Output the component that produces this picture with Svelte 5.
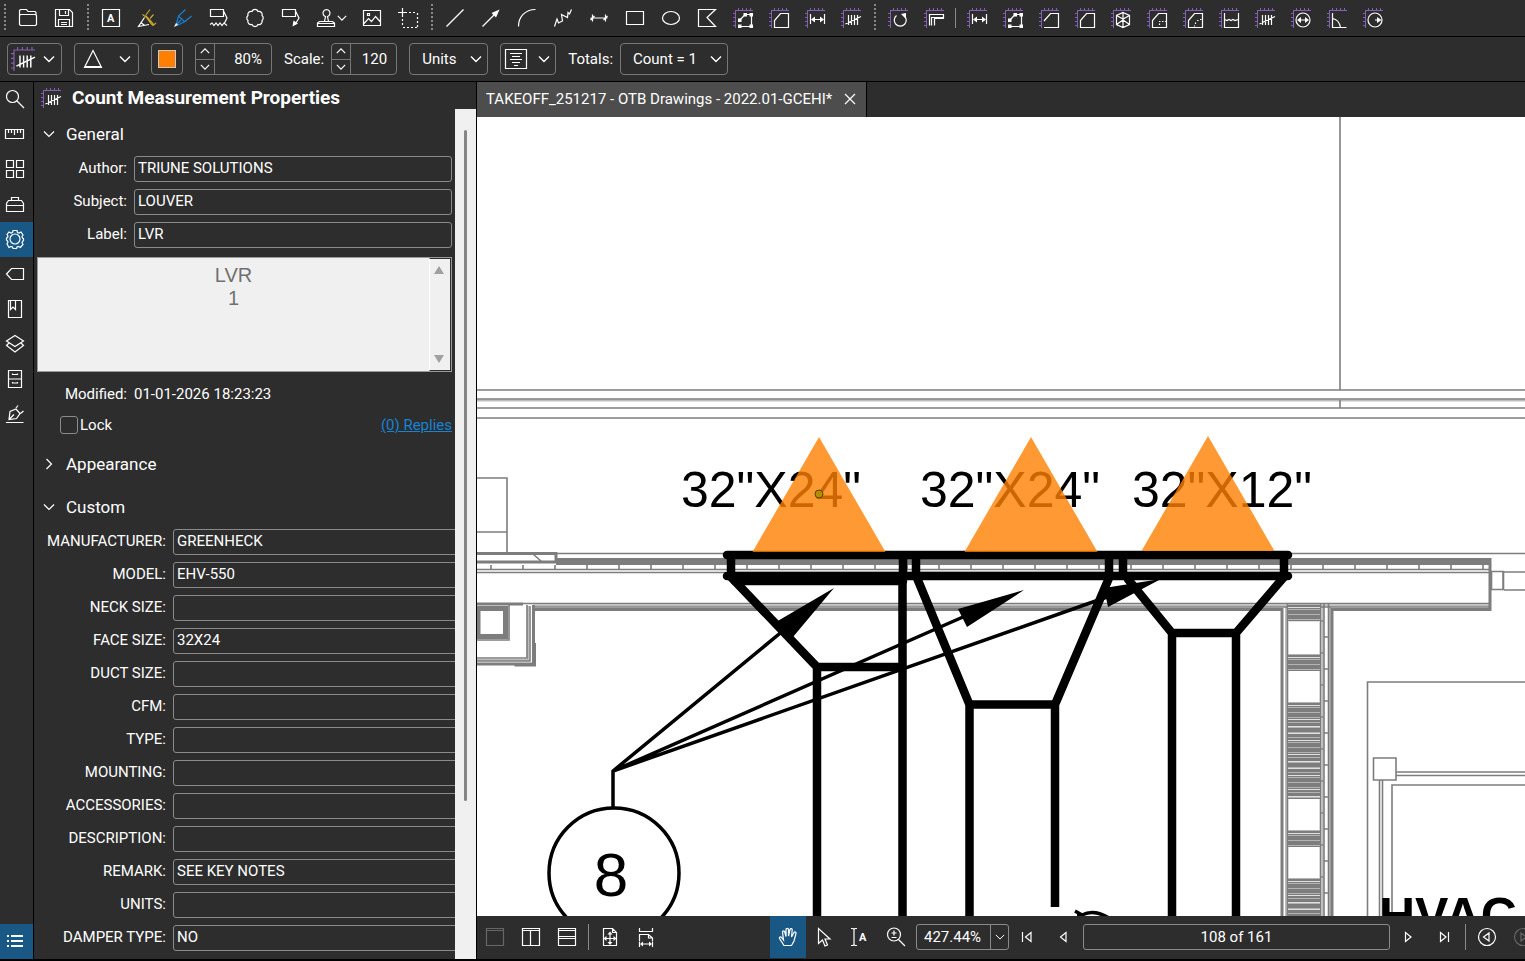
<script lang="ts">
  type Icon = {
    d?: string;
    fill?: string;
    tint?: string;
    accent?: string;
    text?: string;
    tx?: number;
    ty?: number;
    ruler?: boolean;
  };

  const tally = 'M7.5 7v10M10.5 7v10M13.5 7v10M16.5 7v10M4.5 16L20 8.5';

  const icons: Record<string, Icon> = {
    open: { d: 'M1.5 16.5v-14l1-1h6l1.5 2h7l1 1v3M1.5 16.5v-9l1-1h15l1 1v9l-1 1h-15z' },
    save: { d: 'M1.5 1.5h14l3 3v14h-17zM5.5 1.5v6h9v-6M11.5 3v3M4.5 18.5v-7h11v7M7 14.5h6M7 16.5h6' },
    textbox: { d: 'M1.5 1.5h17v17h-17z', text: 'A', tx: 6, ty: 14 },
    highlight: {
      d: 'M7.5 9.5L1.5 18.5L12 16.5M4.5 15l3 2.5',
      tint: '#c9a52b',
      accent: 'M13 1.5L8.5 7.5M5.5 6.5l4 3 4.5 6 2 2 3-2.5M16.5 6.5l-3.5 4M9 8l6 6.5 1.5 2',
    },
    pen: { fill: 'M1 19l2-4 2 2z', tint: '#1683d4', accent: 'M12.5 1.5L5.5 8l-2 7.5L5 17l7-3.5 6.5-5.5M6 8.5l5.5 5M4 16l4-4' },
    squiggle: { d: 'M1.5 1.5h13v7h-13zM14.5 3L18 10l-2.5 5M1 16.5l2-1.5 2 2.5 2-2.5 2 2.5 2-2.5 2 2.5 2-2.5 3 2.5' },
    cloud: {
      d: 'M7 3.5a3.2 3.2 0 0 1 6 0a3.2 3.2 0 0 1 4 4a3.2 3.2 0 0 1 0 5a3.2 3.2 0 0 1-4 4a3.2 3.2 0 0 1-6 0a3.2 3.2 0 0 1-4-4a3.2 3.2 0 0 1 0-5a3.2 3.2 0 0 1 4-4z',
    },
    callout: { d: 'M1.5 1.5h13v7h-13zM14.5 3l3.5 7-4 6.5', fill: 'M11.5 18.5l1-6 4.5 3z' },
    stamp: { d: 'M1.5 18.5h17v-3.5l-2-1.5h-13l-2 1.5zM2 15.5h16M8.5 13.5l1-5a3.5 3.5 0 1 1 2 0l1 5' },
    image: { d: 'M1.5 2.5h17v15h-17zM2 15.5l4.5-5 3 3 4-5 5 5.5M5.5 5.5h2v2h-2z' },
    snapshot: {
      d: 'M4.5 0v9M0 4.5h9M11 4.5h2M15 4.5h2M19.5 5v2M19.5 9v2M19.5 13v2M19.5 17v2M4.5 11v2M4.5 15v2M5 19.5h2M9 19.5h2M13 19.5h2M17 19.5h2',
    },
    line: { d: 'M1.5 18.5l17-17' },
    arrow: { d: 'M1.5 18.5L14 6', fill: 'M18.5 1.5l-8 3.5 4.5 4.5z' },
    arc: { d: 'M1.5 18.5C1.5 9 8 1.5 18.5 1.5' },
    polyline: { d: 'M1.5 18.5l2.5-7.5 1.5 4 4-2-1-6.500 6 3 .5-5 1.500 1.500 2-4.500' },
    dimension: { d: 'M1.5 10h17M3.5 6.5v7M16.5 6.5v7M1.5 12l4-4M14.5 12l4-4' },
    rect: { d: 'M1.5 3.5h17v13h-17z' },
    ellipse: { d: 'M1.5 10a8.5 6.5 0 1 1 17 0a8.5 6.5 0 1 1-17 0z' },
    polygon: { d: 'M1.5 1.5h17L10 9.5l8.5 9H1.5z' },
    mArea: { ruler: true, d: 'M7 12L12 6.5h6.500v12H7', fill: 'M5 10.5h3.5v3.5H5zM10.5 5H14v3.5h-3.5zM16.5 5H20v3.5h-3.5zM5 16.5h3.5V20H5zM16.5 16.5H20V20h-3.5z' },
    mPoly: { ruler: true, d: 'M5.5 19.5v-7l6-7h8v14z' },
    mLength: { ruler: true, d: 'M5.5 6v10M19.5 6v10M7 11.5h11', fill: 'M6 11.5l4-3v6zM19 11.5l-4-3v6z' },
    tally: { ruler: true, d: tally },
    mRotate: { ruler: true, d: 'M8.5 7.5a6 6 0 1 0 7.5 0', fill: 'M18 5v6l-5-5z' },
    mCaliper: { ruler: true, d: 'M5.5 17.5v-11h14v4h-9v7M7.5 17.5v-8h12' },
    mPerimeter: { ruler: true, d: 'M5 13l6.5-7.5h8v14H5' },
    mVolume: { ruler: true, d: 'M12 4.5l6.5 3v9l-6.5 3-6.5-3v-9zM5.5 7.5l6.5 3.5 6.5-3.5M12 4.5v15M5.5 16.5L12 12l6.5 4.5' },
    mCutout: { ruler: true, d: 'M5.5 19.5v-7l6-7h8v14zM12 13.5h1.500M15 13.5h1.500M18 13.500h1M12.500 15.500v1.500' },
    mCutArc: { ruler: true, d: 'M5.5 19.5v-7l6-7h8v14zM17 11.5h1.500M14 12.5h1.500M12.500 14.5v1.500M11.500 17.500v1' },
    mDepth: { ruler: true, d: 'M5.5 5v14.5h14V5M5.5 11.5l2.5 1 2-1 2 1 2-1 2 1 3-1' },
    mDiameter: { ruler: true, d: 'M5 12a7 7 0 1 1 14 0a7 7 0 1 1-14 0M8 12h8', fill: 'M6 12l4-3v6zM18 12l-4-3v6z' },
    mAngle: { ruler: true, d: 'M5.5 5v14.5h14M5.5 10.5q6.5 1 8 9' },
    mRadius: { ruler: true, d: 'M5 12a7 7 0 1 1 14 0a7 7 0 1 1-14 0M12 12h4', fill: 'M18.5 12l-4.5-3v6z' },
    search: { d: 'M1.5 7.5a6 6 0 1 1 12 0a6 6 0 1 1-12 0M12 12l7 7' },
    ruler: { d: 'M.5 5.5h18v9H.5zM3.5 6v3M6.5 6v3M9.5 6v5M12.5 6v3M15.5 6v3' },
    grid: { d: 'M1.5 1.5h7v7h-7zM11.5 1.5h7v7h-7zM1.5 11.5h7v7h-7zM11.5 11.5h7v7h-7z' },
    toolbox: { d: 'M1.5 17.5v-8l2-3h13l2 3v8zM6.5 6.5V3.5h7v3M1.5 11.5h6M12.5 11.5h6M7.5 11.5h5' },
    gear: {
      d: 'M8 1.5h4l.5 2 1.5.5 2-1 2 3-1 1.5.5 1.5 1 .5v2l-1 1-.5 1 1 2-2.5 3-2-1-1.5.5-.5 1.5h-3.5l-.5-1.5-1.5-.5-2 1L2 15l1-2-.5-1-1-1V9l1-.5L3 7 2 5.5 4 3l2 1 1.5-.5zM5 10a5 5 0 1 1 10 0a5 5 0 1 1-10 0',
    },
    tag: { d: 'M1.5 10l5-5.5h12v11h-12z' },
    bookmark: { d: 'M3.5 1.5h13v17h-13zM5.5 1.5v9l2.5-2.5 2.5 2.5v-9' },
    layers: { d: 'M10 1.5l8.5 5.5-8.5 5.5L1.5 7zM4 9l-2.5 2.5L10 18l8.5-6.5L16 9' },
    cabinet: { d: 'M3.5 1.5h13v17h-13zM3.5 10h13M7.5 4.5v1h5v-1M7.5 13v1h5v-1' },
    signature: { d: 'M1 18.5h17.5M4 15.5l1-8 6-2.5 4 4.5-3.5 5zM4 15.5l5-5M11 4l2-2.5M15.5 9.5l3-2.5' },
    list: { fill: 'M2 4h2v2H2zM6 4h12v2H6zM2 9h2v2H2zM6 9h12v2H6zM2 14h2v2H2zM6 14h12v2H6z' },
    single: { d: 'M1.5 1.5h17v17h-17zM1.5 3.5h17', tint: '#666' },
    splitV: { d: 'M1.5 1.5h17v17h-17zM1.5 3.5h17M9.5 3.5v15' },
    splitH: { d: 'M1.5 1.5h17v17h-17zM1.5 3.5h17M1.5 9.5h17M1.5 11.5h17' },
    fitPage: { d: 'M3.5 1.5h9l4 4v13h-13zM12.5 1.5v4h4M10 6v11M4.5 11.5h11', fill: 'M10 4.5l2.5 3h-5zM10 18l2.5-3h-5zM3.5 11.5l3-2.5v5zM16.5 11.5l-3-2.5v5z' },
    fitWidth: { d: 'M3.5 1v3.5h13V1M3.5 14V7.5h9l4 3.5v3M12.5 7.5V11h4M3.5 14.5V20M16.5 14.5V20M5 17h10', fill: 'M4 17l3-2.5v5zM16 17l-3-2.5v5z' },
    hand: { d: 'M6 18.5L1.5 11.5c-.5-1.5 1-2 2-1L5.5 13 4.5 5c0-1.5 2-1.5 2.2 0L8 9.5 8 2.5c0-1.5 2.5-1.5 2.5 0V9l1.5-6.5c.5-1.5 2.5-1 2.2.5L13.5 10l2.5-4.5c.8-1.2 2.5-.3 2 1L16 14l-2.5 4.5z' },
    select: { d: 'M4.5 1.5v15l4-3.5 2.5 6 2.5-1-2.5-6h5z' },
    selectText: { d: 'M1 1.5h2l1 1 1-1h2M4 2v16M1 18.5h2l1-1 1 1h2', text: 'A', tx: 9, ty: 14 },
    zoom: { d: 'M1.5 7.5a6.5 6.5 0 1 1 13 0a6.5 6.5 0 1 1-13 0M12.5 12.5l6.5 6.5M8 3.5v5M5.5 6h5M5.5 10.5h5' },
    first: { d: 'M5.5 5v10M14 5.5v9L8.5 10z' },
    prev: { d: 'M13 5.5v9L7.5 10z' },
    next: { d: 'M7.5 5.5v9L13 10z' },
    last: { d: 'M14.5 5v10M6.5 5.5v9L12 10z' },
    viewBack: { d: 'M1.5 10a8.5 8.5 0 1 1 17 0a8.5 8.5 0 1 1-17 0M12 6v8l-5.5-4z' },
    viewForward: { d: 'M1.5 10a8.5 8.5 0 1 1 17 0a8.5 8.5 0 1 1-17 0M8 6v8l5.5-4z', tint: '#666' },
    triangle: { d: 'M10 1.5l8.5 17h-17zM2 17.5h16' },
    align: { d: 'M4 4.5h12M6 7.5h8M4 10.5h12M6 13.5h8M8 16.5h4M-.5.5h21v19h-21z' },
  };

  const toolGroups = [
    ['open', 'save'],
    ['textbox', 'highlight', 'pen', 'squiggle', 'cloud', 'callout', 'stamp', 'image', 'snapshot'],
    ['line', 'arrow', 'arc', 'polyline', 'dimension', 'rect', 'ellipse', 'polygon', 'mArea', 'mPoly', 'mLength', 'tally'],
    ['mRotate', 'mCaliper', '|', 'mLength', 'mArea', 'mPerimeter', 'mPoly', 'mVolume', 'mCutout', 'mCutArc', 'mDepth', 'tally', 'mDiameter', 'mAngle', 'mRadius'],
  ];

  const rail = ['search', 'ruler', 'grid', 'toolbox', 'gear', 'tag', 'bookmark', 'layers', 'cabinet', 'signature'];

  let general = $state([
    { label: 'Author', value: 'TRIUNE SOLUTIONS' },
    { label: 'Subject', value: 'LOUVER' },
    { label: 'Label', value: 'LVR' },
  ]);

  let custom = $state([
    { label: 'MANUFACTURER', value: 'GREENHECK' },
    { label: 'MODEL', value: 'EHV-550' },
    { label: 'NECK SIZE', value: '' },
    { label: 'FACE SIZE', value: '32X24' },
    { label: 'DUCT SIZE', value: '' },
    { label: 'CFM', value: '' },
    { label: 'TYPE', value: '' },
    { label: 'MOUNTING', value: '' },
    { label: 'ACCESSORIES', value: '' },
    { label: 'DESCRIPTION', value: '' },
    { label: 'REMARK', value: 'SEE KEY NOTES' },
    { label: 'UNITS', value: '' },
    { label: 'DAMPER TYPE', value: 'NO' },
  ]);

  let panel = $state('gear');

  const tags = [
    { x: 681, text: '32"X24"' },
    { x: 920, text: '32"X24"' },
    { x: 1132, text: '32"X12"' },
  ];

  const counts = [
    { x: 819, y: 437 },
    { x: 1031, y: 437 },
    { x: 1208, y: 436 },
  ];

  // hatched insulation blocks in the vertical wall
  const hatches = [
    { y: 604, h: 18 },
    { y: 654, h: 17 },
    { y: 702, h: 97 },
    { y: 830, h: 17 },
    { y: 878, h: 40 },
  ];

  const range = (from: number, to: number, step: number) =>
    Array.from({ length: Math.ceil((to - from) / step) }, (_, i) => from + i * step);
</script>

{#snippet icon(name: string)}
  {@const i = icons[name]}
  <svg class="icon" viewBox="0 0 20 20" aria-hidden="true">
    {#if i.ruler}
      <path class="ruler" d="M2 2.5h18M2.5 2v18M5.5 0v2M9.5 0v2M13.5 0v2M17.5 0v2M0 5.5h2M0 9.5h2M0 13.5h2M0 17.5h2" />
    {/if}
    {#if i.accent}<path d={i.accent} stroke={i.tint} />{/if}
    {#if i.d}<path d={i.d} stroke={i.accent ? '#fff' : (i.tint ?? '#fff')} />{/if}
    {#if i.fill}<path class="solid" d={i.fill} />{/if}
    {#if i.text}<text x={i.tx} y={i.ty}>{i.text}</text>{/if}
  </svg>
{/snippet}

{#snippet chevron(dir = 'down')}
  <svg class="chevron {dir}" viewBox="0 0 12 12" aria-hidden="true"><path d="M1 3.5l5 5 5-5" /></svg>
{/snippet}

{#snippet spinner(id: string, label: string, value: string)}
  <div class="box spinner">
    <div class="steps">
      <button aria-label="Increase {label}">{@render chevron('up')}</button>
      <button aria-label="Decrease {label}">{@render chevron()}</button>
    </div>
    <input {id} aria-label={label} {value} />
  </div>
{/snippet}

<div class="app">
  <header class="tools">
    {#each toolGroups as group}
      <span class="grip"></span>
      {#each group as name}
        {#if name === '|'}
          <span class="sep"></span>
        {:else}
          <button class="tool" class:split={name === 'stamp'} aria-label={name}>
            {@render icon(name)}
            {#if name === 'stamp'}{@render chevron()}{/if}
          </button>
        {/if}
      {/each}
    {/each}
  </header>

  <div class="options">
    <button class="box kind" aria-label="Tool">{@render icon('tally')}{@render chevron()}</button>
    <button class="box shape" aria-label="Shape">{@render icon('triangle')}{@render chevron()}</button>
    <button class="box colour" aria-label="Colour"><span class="swatch"></span></button>
    {@render spinner('opacity', 'Opacity', '80%')}
    <div class="pair">
      <label for="scale">Scale:</label>
      {@render spinner('scale', 'Scale', '120')}
    </div>
    <div class="box drop units">
      <select aria-label="Units"><option>Units</option></select>
      {@render chevron()}
    </div>
    <button class="box align" aria-label="Alignment">{@render icon('align')}{@render chevron()}</button>
    <div class="pair">
      <label for="totals">Totals:</label>
      <div class="box drop totals">
        <select id="totals"><option>Count = 1</option></select>
        {@render chevron()}
      </div>
    </div>
  </div>

  <div class="body">
    <nav class="rail">
      {#each rail as name}
        <button class:active={panel === name} aria-label={name} onclick={() => (panel = name)}>
          {@render icon(name)}
        </button>
      {/each}
      <button class="bottom active" aria-label="Markups list">{@render icon('list')}</button>
    </nav>

    <aside class="panel">
      <h1>{@render icon('tally')}Count Measurement Properties</h1>
      <div class="scroller">
        <div class="props">
          <button class="section">{@render chevron()}General</button>
          <div class="rows">
            {#each general as field}
              <div class="row">
                <label for={field.label}>{field.label}:</label>
                <input id={field.label} bind:value={field.value} />
              </div>
            {/each}
          </div>

          <div class="note">
            <textarea aria-label="Comment" readonly value={'LVR\n1'}></textarea>
            <div class="note-bar">
              <svg viewBox="0 0 10 8"><path d="M5 0l5 8H0z" /></svg>
              <svg viewBox="0 0 10 8"><path d="M0 0h10L5 8z" /></svg>
            </div>
          </div>

          <div class="row modified"><span>Modified:</span><time>01-01-2026 18:23:23</time></div>
          <div class="lock">
            <label><input type="checkbox" />Lock</label>
            <a href="#replies">(0) Replies</a>
          </div>

          <button class="section appearance">{@render chevron('right')}Appearance</button>
          <button class="section">{@render chevron()}Custom</button>
          <div class="rows wide">
            {#each custom as field}
              <div class="row">
                <label for={field.label}>{field.label}:</label>
                <input id={field.label} bind:value={field.value} />
              </div>
            {/each}
          </div>
        </div>
        <div class="scrollbar"><span></span></div>
      </div>
    </aside>

    <main>
      <div class="tabs">
        <div class="tab">
          <span>TAKEOFF_251217 - OTB Drawings - 2022.01-GCEHI*</span>
          <button aria-label="Close tab">
            <svg viewBox="0 0 12 12"><path d="M1 1l10 10M11 1L1 11" /></svg>
          </button>
        </div>
      </div>

      <div class="sheet">
        <svg viewBox="477 117 1048 799" preserveAspectRatio="xMinYMin slice" role="img" aria-label="Drawing sheet">
          <!-- walls -->
          <path class="light" d="M477 400.5h1048M533 605.5h957M1286 606v310M1322.5 606v310M1330 606v310M528 606v54h-51" />
          <g class="thin">
            <path d="M477 390h1048M477 399h1048M477 408h1048M477 418h1048M1340 117v273M1340 400v8" />
            <path d="M477 478h30v74M477 532h30M533 554l9 8M556 553.5h969" />
            <path d="M477 569.5h1013M477 572.5h1013M1504 572h21M1504 590h21" />
            <path d="M1525 682h-157.5v234M1525 785h-133v131M1373.5 758h22.5v22h-22.5z" />
            <path d="M1396 772h129M1396 775.5h129M1379.5 780v136M1382.5 780v136" />
            <path d="M523 603.5h967M533 607h957M1287.5 604v312M1320.5 604v312M1324 604v312M1328.5 604v312M527 605v53h-50M530 606v55h-53" />
            {#each range(491, 1490, 32) as x}<path d="M{x} 565v5" />{/each}
            {#each range(637, 916, 32) as y}<path d="M1324 {y}h5M1320 {y - 16}h3" />{/each}
          </g>
          <path class="thick" d="M477 553.5h79v8M477 562h79M477 604h46M534 609.5h748v307M1490 558v53M1490 609.5h-158v307" />
          <path class="thick" d="M533.5 605v59h-56.500M534.500 643v22h-20" />
          <path class="thin" d="M1491.5 571.5h12v18h-12zM1503 571v19" />
          <path class="band" d="M556 561.5h934" />
          <rect class="column" x="478" y="608.5" width="27.5" height="28" />
          <path class="thin" d="M509 604v36h-32" />
          {#each hatches as h}
            <rect class="hatch" x="1288" y={h.y} width="32" height={h.h} />
            {#each range(h.y + 3, h.y + h.h, 7) as y}<path class="gapline" d="M1288 {y + 0.5}h32" />{/each}
            {#each range(h.y, h.y + h.h, 5) as y}<path class="softline" d="M1288 {y + 0.5}h32" />{/each}
          {/each}

          <!-- notes -->
          {#each tags as t}<text class="dim" x={t.x} y="507">{t.text}</text>{/each}
          <text class="dim key" x="611" y="896">8</text>
          <text class="dim room" x="1379" y="933">HVAC</text>

          <!-- ducts -->
          <g class="duct">
            <path d="M727 555h561M727 576h561M731 555v21M903 555v21M916 555v21M1109 555v21M1123 555v21M1284 555v21M735 581h168" stroke-linecap="round" />
            <path d="M731 577l86 90v249M817 667h86M902.5 576v340" />
            <path d="M917 578l52.5 126.5V916M969.5 704.5h85.5V907M1055 704.5L1109 578" />
            <path d="M1127 578l45 55v283M1172 633h64v283M1236 633l48-56" />
          </g>

          <!-- leaders -->
          <g class="leader">
            <path d="M613 808v-37L784 630M613 771l350-154M613 771l494-174" />
            <circle cx="614" cy="873" r="65" />
            <path d="M1075 911l7 4q12-6 27 3M1082 915h-5" />
          </g>
          <path d="M776 622l58-34-41 49zM958 609l66-19-57 37zM1104 588l57-9-53 28z" />

          {#each counts as c}
            <path class="count" d="M{c.x} {c.y}l66.5 115h-133z" />
          {/each}
          <circle class="anchor" cx="819" cy="494" r="4" />
        </svg>
      </div>

      <footer class="status">
        {#each ['single', 'splitV', 'splitH'] as name}
          <button class="tool" aria-label={name}>{@render icon(name)}</button>
        {/each}
        <span class="sep"></span>
        {#each ['fitPage', 'fitWidth'] as name}
          <button class="tool" aria-label={name}>{@render icon(name)}</button>
        {/each}
        <span class="spacer"></span>
        {#each ['hand', 'select', 'selectText', 'zoom'] as name}
          <button class="tool" class:active={name === 'hand'} aria-label={name}>{@render icon(name)}</button>
        {/each}
        <div class="field zoom">
          <input aria-label="Zoom" value="427.44%" />
          <button aria-label="Zoom presets">{@render chevron()}</button>
        </div>
        {#each ['first', 'prev'] as name}
          <button class="tool" aria-label={name}>{@render icon(name)}</button>
        {/each}
        <input class="field page" aria-label="Page" value="108 of 161" />
        {#each ['next', 'last'] as name}
          <button class="tool" aria-label={name}>{@render icon(name)}</button>
        {/each}
        <span class="sep"></span>
        {#each ['viewBack', 'viewForward'] as name}
          <button class="tool" aria-label={name}>{@render icon(name)}</button>
        {/each}
      </footer>
    </main>
  </div>
</div>

<style>
  :global(body) {
    margin: 0;
    background: #000;
  }

  .app,
  .app * {
    box-sizing: border-box;
  }

  .app {
    display: flex;
    flex-direction: column;
    height: 100vh;
    padding-bottom: 2px;
    overflow: hidden;
    background: #000;
    color: #fff;
    font: 15px/20px Roboto, 'Liberation Sans', sans-serif;
  }

  button,
  input,
  select,
  textarea {
    margin: 0;
    padding: 0;
    border: 0;
    border-radius: 0;
    outline: 0;
    background: none;
    color: inherit;
    font: inherit;
  }

  button {
    display: flex;
    align-items: center;
    justify-content: center;
    flex: none;
  }

  .icon {
    flex: none;
    width: 20px;
    height: 20px;
    overflow: visible;
    fill: none;
    stroke-width: 1.2;
  }

  .icon .ruler {
    stroke: #8360b0;
    stroke-width: 1;
  }

  .icon .solid,
  .icon text {
    fill: #fff;
    stroke: none;
  }

  .icon text {
    font: bold 11px Roboto, sans-serif;
  }

  .chevron {
    flex: none;
    width: 12px;
    height: 12px;
    fill: none;
    stroke: #fff;
    stroke-width: 1.4;
    pointer-events: none;
  }

  .chevron.up {
    transform: rotate(180deg);
  }

  .chevron.right {
    transform: rotate(-90deg);
  }

  .tools {
    display: flex;
    flex: none;
    height: 36px;
    margin-bottom: 1px;
    background: #2d2d2d;
  }

  .grip {
    flex: none;
    width: 11px;
    margin: 4px 0;
    background: linear-gradient(#888 50%, transparent 50%) center / 2px 4px repeat-y;
  }

  .grip:first-child {
    width: 10px;
  }

  .tool {
    width: 36px;
    height: 100%;
  }

  .tool.split {
    width: 45px;
    gap: 1px;
  }

  .tool.split .chevron {
    width: 10px;
  }

  .active {
    background: #195885;
  }

  .sep {
    flex: none;
    width: 7px;
    height: 20px;
    margin: 8px 0;
    background: linear-gradient(#8a8a8a, #8a8a8a) center / 1px 100% no-repeat;
  }

  .options {
    display: flex;
    align-items: center;
    flex: none;
    gap: 12px;
    height: 44px;
    margin-bottom: 1px;
    padding-left: 7px;
    background: #2d2d2d;
  }

  .box {
    display: flex;
    align-items: center;
    height: 32px;
    border: 1px solid #777;
    border-radius: 4px;
  }

  .kind {
    width: 55px;
    gap: 8px;
    padding-right: 4px;
  }

  .kind .icon {
    width: 24px;
    height: 24px;
  }

  .shape {
    width: 65px;
    gap: 16px;
  }

  .colour {
    width: 32px;
  }

  .swatch {
    width: 18px;
    height: 18px;
    border: 1px solid #ccc;
    background: #ff8000;
  }

  .align {
    width: 56px;
    gap: 12px;
  }

  .pair {
    display: flex;
    align-items: center;
    gap: 7px;
  }

  .spinner {
    width: 77px;
  }

  .pair .spinner {
    width: 66px;
  }

  .spinner input {
    flex: 1;
    min-width: 0;
    height: 100%;
    padding-right: 9px;
    text-align: right;
  }

  .steps {
    display: flex;
    flex-direction: column;
    width: 19px;
    height: 100%;
    border-right: 1px solid #777;
  }

  .steps button {
    flex: 1;
  }

  .steps button + button {
    border-top: 1px solid #777;
  }

  .steps .chevron {
    width: 10px;
    height: 10px;
  }

  .drop {
    display: grid;
    grid-template-columns: 1fr 12px;
    padding-right: 5px;
  }

  .drop select {
    grid-area: 1 / 1 / 2 / 3;
    height: 100%;
    padding-left: 12px;
    appearance: none;
  }

  .drop .chevron {
    grid-area: 1 / 2;
  }

  .units {
    width: 79px;
  }

  .totals {
    width: 108px;
  }

  .body {
    display: flex;
    flex: 1;
    gap: 1px;
    min-height: 0;
  }

  .rail {
    display: flex;
    flex-direction: column;
    flex: none;
    width: 33px;
    background: #2d2d2d;
  }

  .rail button {
    justify-content: flex-start;
    height: 35px;
    padding: 0 0 1px 5px;
  }

  .rail .bottom {
    margin-top: auto;
  }

  .panel {
    display: flex;
    flex-direction: column;
    flex: none;
    width: 442px;
    background: #2d2d2d;
  }

  h1 {
    display: flex;
    align-items: center;
    flex: none;
    gap: 11px;
    height: 27px;
    margin: 0;
    padding: 4px 0 0 7px;
    font-size: 19px;
    line-height: 20px;
  }

  .scroller {
    display: flex;
    flex: 1;
    min-height: 0;
  }

  .props {
    flex: 1;
    min-width: 0;
    padding: 10px 3px 0;
    overflow: hidden;
  }

  .section {
    gap: 11px;
    height: 30px;
    padding-left: 6px;
    font-size: 17px;
  }

  .section .chevron {
    stroke-width: 1.2;
  }

  .rows {
    display: flex;
    flex-direction: column;
    gap: 7px;
    padding-top: 7px;
  }

  .row {
    display: grid;
    grid-template-columns: 90px 1fr;
    gap: 7px;
    text-align: right;
  }

  .row label {
    line-height: 24px;
    white-space: nowrap;
  }

  .row input {
    min-width: 0;
    height: 26px;
    padding: 0 3px 2px;
    border: 1px solid #8a8a8a;
    border-radius: 3px;
  }

  .wide {
    margin-right: -10px;
  }

  .wide .row {
    grid-template-columns: 129px 1fr;
  }

  .note {
    display: flex;
    height: 115px;
    margin-top: 9px;
    border: 1px solid #9a9a9a;
    background: #f0f0f0;
  }

  .note textarea {
    flex: 1;
    padding-top: 6px;
    resize: none;
    overflow: hidden;
    color: #707070;
    font: 20px/23px 'Liberation Sans', sans-serif;
    text-align: center;
  }

  .note-bar {
    display: flex;
    flex-direction: column;
    align-items: center;
    justify-content: space-between;
    width: 22px;
    padding: 7px 2px 7px 0;
    border: 1px solid #2d2d2d;
    border-left-color: #fff;
  }

  .note-bar svg {
    width: 10px;
    height: 8px;
    fill: #a0a0a0;
  }

  .modified {
    margin-top: 12px;
  }

  .modified time {
    text-align: left;
  }

  .lock {
    display: flex;
    justify-content: space-between;
    margin-top: 11px;
    padding-left: 23px;
  }

  .lock label {
    display: flex;
    align-items: center;
    gap: 2px;
  }

  .lock input {
    width: 18px;
    height: 18px;
    border: 1px solid #8a8a8a;
    border-radius: 3px;
    appearance: none;
  }

  .lock a {
    color: #1683d4;
  }

  .appearance {
    margin: 14px 0 13px;
  }

  .scrollbar {
    display: flex;
    justify-content: center;
    width: 21px;
    padding-top: 21px;
    background: #f0f0f0;
  }

  .scrollbar span {
    width: 3px;
    height: 81%;
    border-radius: 2px;
    background: #858585;
  }

  main {
    display: flex;
    flex-direction: column;
    flex: 1;
    min-width: 0;
    background: #2d2d2d;
  }

  .tabs {
    display: flex;
    flex: none;
    height: 35px;
  }

  .tab {
    display: flex;
    align-items: center;
    gap: 12px;
    padding: 0 10px 1px 9px;
    border-right: 1px solid #000;
    background: #4d4d4d;
    white-space: nowrap;
  }

  .tab svg {
    width: 12px;
    height: 12px;
    stroke: #fff;
    stroke-width: 1.2;
  }

  .sheet {
    flex: 1;
    min-height: 0;
    overflow: hidden;
    background: #fff;
  }

  .sheet svg {
    display: block;
    width: 100%;
    height: 100%;
  }

  .sheet .thin,
  .sheet .thick,
  .sheet .light {
    fill: none;
    stroke: #7d7d7d;
    stroke-width: 1.6;
  }

  .sheet .thick {
    stroke-width: 3;
  }

  .sheet .light {
    stroke: #bdbdbd;
    stroke-width: 2;
  }

  .band {
    stroke: #7d7d7d;
    stroke-width: 7;
  }

  .column {
    fill: #fff;
    stroke: #7d7d7d;
    stroke-width: 5;
  }

  .hatch {
    fill: #7d7d7d;
  }

  .gapline {
    stroke: #e0e0e0;
  }

  .softline {
    stroke: #b4b4b4;
  }

  .dim {
    font: 50px 'Liberation Sans', sans-serif;
  }

  .key {
    font-size: 62px;
    text-anchor: middle;
  }

  .room {
    font-weight: bold;
  }

  .duct {
    fill: none;
    stroke: #000;
    stroke-width: 8.5;
  }

  .leader {
    fill: none;
    stroke: #000;
    stroke-width: 3.5;
  }

  .count {
    fill: #ff8000;
    fill-opacity: 0.8;
  }

  .anchor {
    fill: #b38f00;
    stroke: #5a4500;
  }

  .status {
    display: flex;
    align-items: center;
    flex: none;
    height: 43px;
    padding-bottom: 1px;
    overflow: hidden;
  }

  .status .tool .icon {
    margin: 0 1px 1px 0;
  }

  .status .sep {
    height: 26px;
  }

  .spacer {
    flex: none;
    width: 106px;
  }

  .field {
    height: 26px;
    border: 1px solid #8a8a8a;
    border-radius: 3px;
  }

  .zoom {
    display: flex;
    flex: none;
    width: 93px;
    margin-left: 2px;
  }

  .zoom input {
    flex: 1;
    min-width: 0;
    padding-left: 7px;
  }

  .zoom button {
    width: 18px;
    border-left: 1px solid #8a8a8a;
  }

  .zoom .chevron {
    width: 10px;
    stroke-width: 1.2;
  }

  .page {
    flex: 1;
    min-width: 0;
    margin-left: 2px;
    text-align: center;
  }

  .status .tool:last-child {
    margin-right: -16px;
  }
</style>
